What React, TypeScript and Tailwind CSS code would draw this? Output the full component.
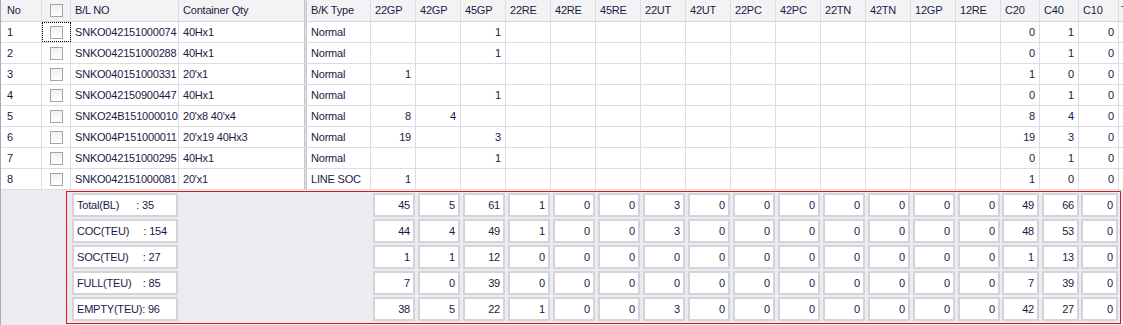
import React from "react";

type Col = { key: string; w: string; boxW: string; boxMl: string };

const numCols: Col[] = [
  ...["22GP", "42GP", "45GP", "22RE", "42RE", "45RE", "22UT", "42UT", "22PC", "42PC", "22TN", "42TN", "12GP", "12RE"].map(
    (k) => ({ key: k, w: "w-[45px]", boxW: "w-[42px]", boxMl: "ml-[2px]" })
  ),
  { key: "C20", w: "w-[39px]", boxW: "w-[37px]", boxMl: "ml-[1px]" },
  { key: "C40", w: "w-[39px]", boxW: "w-[37px]", boxMl: "ml-[2px]" },
  { key: "C10", w: "w-[40px]", boxW: "w-[37px]", boxMl: "ml-[2px]" },
];

interface Row {
  no: number;
  bl: string;
  qty: string;
  type: string;
  vals: Record<string, number>;
}

const rows: Row[] = [
  { no: 1, bl: "SNKO042151000074", qty: "40Hx1", type: "Normal", vals: { "45GP": 1, C20: 0, C40: 1, C10: 0 } },
  { no: 2, bl: "SNKO042151000288", qty: "40Hx1", type: "Normal", vals: { "45GP": 1, C20: 0, C40: 1, C10: 0 } },
  { no: 3, bl: "SNKO040151000331", qty: "20'x1", type: "Normal", vals: { "22GP": 1, C20: 1, C40: 0, C10: 0 } },
  { no: 4, bl: "SNKO042150900447", qty: "40Hx1", type: "Normal", vals: { "45GP": 1, C20: 0, C40: 1, C10: 0 } },
  { no: 5, bl: "SNKO24B151000010", qty: "20'x8 40'x4", type: "Normal", vals: { "22GP": 8, "42GP": 4, C20: 8, C40: 4, C10: 0 } },
  { no: 6, bl: "SNKO04P151000011", qty: "20'x19 40Hx3", type: "Normal", vals: { "22GP": 19, "45GP": 3, C20: 19, C40: 3, C10: 0 } },
  { no: 7, bl: "SNKO042151000295", qty: "40Hx1", type: "Normal", vals: { "45GP": 1, C20: 0, C40: 1, C10: 0 } },
  { no: 8, bl: "SNKO042151000081", qty: "20'x1", type: "LINE SOC", vals: { "22GP": 1, C20: 1, C40: 0, C10: 0 } },
];

const totals: { label: string; vals: number[] }[] = [
  { label: "Total(BL)      : 35", vals: [45, 5, 61, 1, 0, 0, 3, 0, 0, 0, 0, 0, 0, 0, 49, 66, 0] },
  { label: "COC(TEU)     : 154", vals: [44, 4, 49, 1, 0, 0, 3, 0, 0, 0, 0, 0, 0, 0, 48, 53, 0] },
  { label: "SOC(TEU)     : 27", vals: [1, 1, 12, 0, 0, 0, 0, 0, 0, 0, 0, 0, 0, 0, 1, 13, 0] },
  { label: "FULL(TEU)    : 85", vals: [7, 0, 39, 0, 0, 0, 0, 0, 0, 0, 0, 0, 0, 0, 7, 39, 0] },
  { label: "EMPTY(TEU): 96", vals: [38, 5, 22, 1, 0, 0, 3, 0, 0, 0, 0, 0, 0, 0, 42, 27, 0] },
];

function CheckBox() {
  return (
    <span className="block h-[13px] w-[13px] border border-[#a4a4ac] bg-gradient-to-b from-[#f0f0f3] to-white" />
  );
}

export default function App() {
  return (
    <div className="flex h-[325px] w-[1123px] flex-col overflow-hidden border-l border-[#a9a9b1] bg-[#ebebf0] font-['Liberation_Sans',Arial,sans-serif] text-[11px] tracking-[-0.2px] text-[#1a1a44]">
      {/* header */}
      <div className="flex h-[22px] shrink-0 border-b border-[#d4d4da] bg-[#f3f3f6]">
        <div className="flex w-[41px] shrink-0 items-center border-r border-[#dcdce2] pl-[6px]">No</div>
        <div className="flex w-[29px] shrink-0 items-center justify-center border-r border-[#dcdce2]">
          <CheckBox />
        </div>
        <div className="flex w-[108px] shrink-0 items-center border-r border-[#dcdce2] pl-[4px]">B/L NO</div>
        <div className="flex w-[125px] shrink-0 items-center pl-[4px]">Container Qty</div>
        <div className="w-[3px] shrink-0 border-x border-[#c4c4cc] bg-[#e2e2e8]" />
        <div className="flex w-[64px] shrink-0 items-center border-r border-[#dcdce2] pl-[4px]">B/K Type</div>
        {numCols.map((c) => (
          <div key={c.key} className={`${c.w} flex shrink-0 items-center border-r border-[#dcdce2] pl-[4px]`}>
            {c.key}
          </div>
        ))}
        <div className="flex min-w-0 flex-1 items-center overflow-hidden pl-[2px]">TEU</div>
      </div>

      {/* rows */}
      {rows.map((r) => (
        <div key={r.no} className="flex h-[21px] shrink-0 border-b border-[#dcdce2] bg-white">
          <div className="flex w-[41px] shrink-0 items-center border-r border-[#dcdce2] pl-[6px]">{r.no}</div>
          <div
            className={`flex w-[29px] shrink-0 items-center justify-center border-r border-[#dcdce2] ${
              r.no === 1 ? "outline outline-1 -outline-offset-1 outline-dotted outline-black" : ""
            }`}
          >
            <CheckBox />
          </div>
          <div className="flex w-[108px] shrink-0 items-center overflow-hidden whitespace-nowrap border-r border-[#dcdce2] pl-[4px]">
            {r.bl}
          </div>
          <div className="flex w-[125px] shrink-0 items-center pl-[4px]">{r.qty}</div>
          <div className="w-[3px] shrink-0 border-x border-[#c4c4cc] bg-[#e2e2e8]" />
          <div className="flex w-[64px] shrink-0 items-center border-r border-[#dcdce2] pl-[4px]">{r.type}</div>
          {numCols.map((c) => (
            <div key={c.key} className={`${c.w} flex shrink-0 items-center justify-end border-r border-[#dcdce2] pr-[4px]`}>
              {r.vals[c.key] ?? ""}
            </div>
          ))}
          <div className="min-w-0 flex-1" />
        </div>
      ))}

      {/* summary footer */}
      <div className="flex flex-1 pt-[1px]">
        <div className="w-[65px] shrink-0" />
        <div className="flex h-[133px] w-[1055px] shrink-0 flex-col gap-[2px] border border-[#e0161c] pl-[5px] pt-[1px]">
          {totals.map((t) => (
            <div key={t.label} className="flex h-[24px] shrink-0">
              <div className="flex w-[106px] shrink-0 items-center whitespace-pre border-2 border-[#d3d3da] bg-white pl-[3px]">
                {t.label}
              </div>
              <div className="w-[193px] shrink-0" />
              {numCols.map((c, i) => (
                <div key={c.key} className={`${c.w} shrink-0`}>
                  <div
                    className={`${c.boxW} ${c.boxMl} flex h-[24px] items-center justify-end border-2 border-[#d3d3da] bg-white pr-[3px]`}
                  >
                    {t.vals[i]}
                  </div>
                </div>
              ))}
            </div>
          ))}
        </div>
      </div>
    </div>
  );
}
